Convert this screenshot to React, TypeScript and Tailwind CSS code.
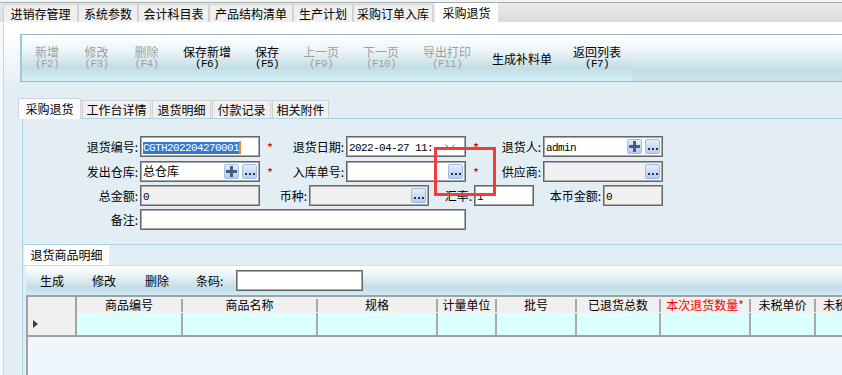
import React from 'react';

const mono = "font-['Liberation_Mono',monospace] text-[11px] tracking-[-0.6px]";

const topTabs = [
  { t: '进销存管理', w: 75 },
  { t: '系统参数', w: 60 },
  { t: '会计科目表', w: 71 },
  { t: '产品结构清单', w: 84 },
  { t: '生产计划', w: 60 },
  { t: '采购订单入库', w: 80 },
];

const tools = [
  { t: '新增', k: '(F2)', w: 50, off: true },
  { t: '修改', k: '(F3)', w: 49, off: true },
  { t: '删除', k: '(F4)', w: 51, off: true },
  { t: '保存新增', k: '(F6)', w: 70 },
  { t: '保存', k: '(F5)', w: 50 },
  { t: '上一页', k: '(F9)', w: 58, off: true },
  { t: '下一页', k: '(F10)', w: 62, off: true },
  { t: '导出打印', k: '(F11)', w: 70, off: true },
  { t: '生成补料单', k: '', w: 80 },
  { t: '返回列表', k: '(F7)', w: 70 },
];

const cols = [
  { t: '商品编号', w: 106 },
  { t: '商品名称', w: 135 },
  { t: '规格', w: 120 },
  { t: '计量单位', w: 59 },
  { t: '批号', w: 80 },
  { t: '已退货总数', w: 84 },
  { t: '本次退货数量*', w: 90, red: true },
  { t: '未税单价', w: 65 },
  { t: '未税金额', w: 64 },
];

function PlusBtn() {
  return (
    <div className="w-[15px] h-[15px] rounded-[2px] border border-[#a3bce6] bg-[linear-gradient(to_bottom,#e4edfc,#b4ccf4)] flex items-center justify-center">
      <svg width="11" height="11" viewBox="0 0 11 11">
        <path d="M4 0h3v4h4v3H7v4H4V7H0V4h4z" fill="#4b5b7c" />
      </svg>
    </div>
  );
}

function DotsBtn() {
  return (
    <div className="w-[15px] h-[15px] rounded-[2px] border border-[#a3bce6] bg-[linear-gradient(to_bottom,#e4edfc,#b4ccf4)] flex items-end justify-center pb-[3px]">
      <svg width="10" height="2" viewBox="0 0 10 2">
        <rect x="0" y="0" width="2" height="2" fill="#2d3442" />
        <rect x="4" y="0" width="2" height="2" fill="#2d3442" />
        <rect x="8" y="0" width="2" height="2" fill="#2d3442" />
      </svg>
    </div>
  );
}

function Box({ w, gray, children, btns }: { w: number; gray?: boolean; children?: React.ReactNode; btns?: React.ReactNode }) {
  return (
    <div
      className={`h-[21px] border border-[#666] shadow-[inset_0_0_0_1px_#a8a8a8] flex items-center pl-[2px] pr-[2px] shrink-0 ${gray ? 'bg-[#f0f0f0]' : 'bg-white'}`}
      style={{ width: w }}
    >
      <div className="flex-1 h-full leading-[17px] overflow-hidden whitespace-nowrap">{children}</div>
      {btns && <div className="flex gap-[3px]">{btns}</div>}
    </div>
  );
}

function Label({ w, children }: { w: number; children: React.ReactNode }) {
  return (
    <div className="text-right pr-[2px] whitespace-nowrap shrink-0" style={{ width: w }}>
      {children}
    </div>
  );
}

function Star() {
  return <div className="w-[20px] shrink-0 text-center text-[#e00000] text-[13px] leading-[13px] self-start mt-[5px]">*</div>;
}

export default function App() {
  return (
    <div className="relative w-[842px] h-[375px] overflow-hidden bg-[#e3eef4] text-[12px] text-black font-['Noto_Sans_CJK_SC','Noto_Sans',sans-serif] flex flex-col">
      {/* top module tabs */}
      <div className="pt-[2px] bg-[#f3f5f5]">
        <div className="h-[20px] border-t border-[#a2aeae] bg-[linear-gradient(to_bottom,#e9e9eb,#dcdcdf)] flex items-end pl-[3px]">
          {topTabs.map((tab) => (
            <div
              key={tab.t}
              className="h-[18px] bg-[#f0f0f0] border border-b-0 border-[#d2d2d2] flex items-center justify-center leading-[16px]"
              style={{ width: tab.w }}
            >
              {tab.t}
            </div>
          ))}
          <div className="ml-[2px] w-[63px] h-[19px] bg-white flex items-center justify-center leading-[16px]">采购退货</div>
        </div>
      </div>

      <div className="flex flex-1 min-h-0">
        <div className="w-[3px] bg-[#f4f8fb]" />
        <div className="w-px bg-[#c4d8e2]" />
        <div className="flex-1 flex flex-col min-w-0">
          <div className="h-[12px] bg-white" />

          {/* main toolbar */}
          <div className="flex h-[48px]">
            <div className="w-[16px] bg-[linear-gradient(to_bottom,#ffffff,#e6f0f5)]" />
            <div className="flex-1 flex items-stretch border-t border-b border-[#a4b6bd] border-l-2 border-l-[#a3c6d2] bg-[linear-gradient(to_bottom,#ffffff_0%,#ebf4f7_35%,#c5dde6_78%,#c9e4ee_100%)]">
              <div className="flex bg-[linear-gradient(to_bottom,#ffffff_0%,#ebf4f7_35%,#c3dde6_72%,#d3f2fb_100%)]">
                {tools.map((b) => (
                  <div
                    key={b.t}
                    className={`flex flex-col items-center justify-center ${b.off ? 'text-[#9f9f9f]' : 'text-black'}`}
                    style={{ width: b.w }}
                  >
                    <div className="leading-[13px] whitespace-nowrap">{b.t}</div>
                    {b.k && <div className={`${mono} leading-[13px]`}>{b.k}</div>}
                  </div>
                ))}
              </div>
            </div>
          </div>

          <div className="flex-1 flex flex-col min-h-0 pl-[16px]">
            <div className="h-[16px] shrink-0" />

            {/* form tabs */}
            <div className="h-[20px] shrink-0 flex items-end -ml-[2px]">
              <div className="relative z-10 -mb-px w-[63px] h-[21px] bg-white border border-b-0 border-[#cfd6da] flex items-center justify-center leading-[16px]">
                采购退货
              </div>
              {[
                { t: '工作台详情', w: 69 },
                { t: '退货明细', w: 59 },
                { t: '付款记录', w: 59 },
                { t: '相关附件', w: 57 },
              ].map((tab) => (
                <div
                  key={tab.t}
                  className="ml-px h-[18px] bg-[#f0f0f0] border border-b-0 border-[#d0d0d0] flex items-center justify-center leading-[16px]"
                  style={{ width: tab.w }}
                >
                  {tab.t}
                </div>
              ))}
            </div>

            {/* form panel */}
            <div className="ml-[2px] shrink-0 border border-r-0 border-[#abd3e3] pt-[17px] pb-[14px] flex flex-col">
              <div className="flex items-center h-[21px]">
                <Label w={117}>退货编号:</Label>
                <Box w={120}>
                  <span className={`${mono} bg-[#2f7ad8] text-white`}>CGTH202204270001</span>
                  <span className="inline-block w-[2px] h-[13px] align-middle bg-[#f08a24]" />
                </Box>
                <Star />
                <Label w={66}>退货日期:</Label>
                <Box
                  w={120}
                  btns={
                    <div className="w-[26px] flex justify-center">
                      <svg width="10" height="6" viewBox="0 0 10 6">
                        <path d="M0.5 0.5L5 5L9.5 0.5" stroke="#7a7a7a" fill="none" />
                      </svg>
                    </div>
                  }
                >
                  <span className={mono}>2022-04-27 11:</span>
                </Box>
                <Star />
                <Label w={57}>退货人:</Label>
                <Box w={120} btns={<><PlusBtn /><DotsBtn /></>}>
                  <span className={mono}>admin</span>
                </Box>
              </div>

              <div className="flex items-center h-[21px] mt-[4px]">
                <Label w={117}>发出仓库:</Label>
                <Box w={120} btns={<><PlusBtn /><DotsBtn /></>}>
                  总仓库
                </Box>
                <Star />
                <Label w={66}>入库单号:</Label>
                <Box w={120} btns={<DotsBtn />} />
                <Star />
                <Label w={57}>供应商:</Label>
                <Box w={120} gray btns={<DotsBtn />} />
              </div>

              <div className="flex items-center h-[21px] mt-[3px]">
                <Label w={117}>总金额:</Label>
                <Box w={120} gray>
                  <span className={mono}>0</span>
                </Box>
                <Label w={49}>币种:</Label>
                <Box w={120} gray btns={<DotsBtn />} />
                <Label w={45}>汇率:</Label>
                <Box w={60}>
                  <span className={mono}>1</span>
                </Box>
                <Label w={69}>本币金额:</Label>
                <Box w={60} gray>
                  <span className={mono}>0</span>
                </Box>
              </div>

              <div className="flex items-center h-[21px] mt-[3px]">
                <Label w={117}>备注:</Label>
                <Box w={326} />
              </div>
            </div>

            {/* detail section */}
            <div className="ml-[2px] flex-1 flex flex-col border-l border-[#abd3e3] min-h-0">
              <div className="h-[21px] shrink-0 flex items-end border-b border-[#d3dde2]">
                <div className="ml-px w-[85px] h-[20px] bg-white flex items-center justify-center leading-[16px]">退货商品明细</div>
              </div>

              <div className="ml-[3px] flex-1 flex flex-col min-h-0">
                <div className="h-[29px] shrink-0 flex items-center bg-[linear-gradient(to_bottom,#ffffff_0%,#ebf4f7_30%,#c3dce6_75%,#d0eef8_100%)]">
                  <div className="ml-[14px]">生成</div>
                  <div className="ml-[28px]">修改</div>
                  <div className="ml-[29px]">删除</div>
                  <div className="ml-[27px] w-[40px]">条码:</div>
                  <div className="w-[127px] h-[21px] bg-white border border-[#666] shadow-[inset_0_0_0_1px_#a8a8a8]" />
                </div>

                <div className="flex-1 flex flex-col border-l-2 border-[#a2a2a2] bg-[#eff7fd] min-h-0">
                  <div className="h-[18px] shrink-0 border-t-2 border-[#a2a2a2] bg-[#f0f0f0] flex">
                    <div className="w-[49px] border-r-2 border-[#a2a2a2] shrink-0" />
                    {cols.map((c) => (
                      <div key={c.t} className="flex items-center shrink-0" style={{ width: c.w }}>
                        <span className={`flex-1 text-center leading-[16px] whitespace-nowrap ${c.red ? 'text-[#ee0000]' : ''}`}>{c.t}</span>
                        <span className="w-[2px] h-[13px] bg-[#a9a9a9]" />
                      </div>
                    ))}
                  </div>
                  <div className="h-[24px] shrink-0 border-b-2 border-[#a2a2a2] bg-[#dbfefe] flex">
                    <div className="w-[49px] border-r-2 border-[#a2a2a2] bg-[#f0f0f0] shrink-0 flex items-center pl-[5px]">
                      <svg width="5" height="8" viewBox="0 0 5 8">
                        <path d="M0 0L5 4L0 8z" fill="#3c3c3c" />
                      </svg>
                    </div>
                    {cols.map((c) => (
                      <div key={c.t} className="border-r-2 border-[#a9a9a9] shrink-0" style={{ width: c.w }} />
                    ))}
                  </div>
                </div>
              </div>
            </div>
          </div>
        </div>
      </div>

      {/* highlight annotation */}
      <div className="absolute left-[434px] top-[147px] w-[62px] h-[49px] border-[3px] border-[#f23c3c]" />
    </div>
  );
}
